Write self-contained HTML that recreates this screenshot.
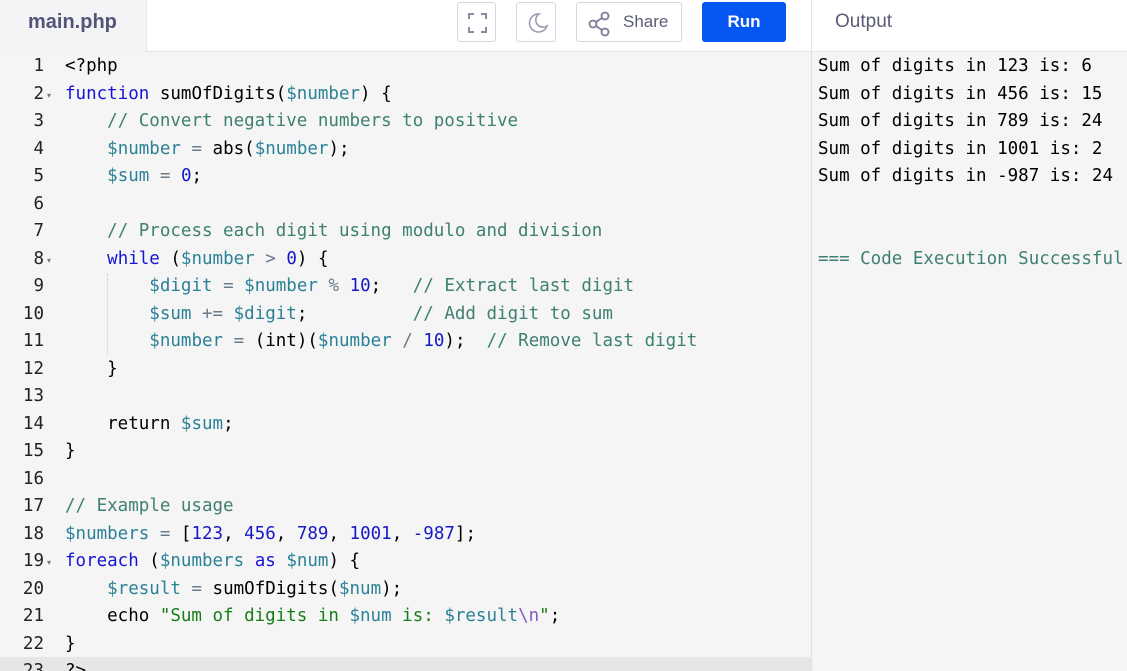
<!DOCTYPE html>
<html><head><meta charset="utf-8"><style>
*{margin:0;padding:0;box-sizing:border-box}
html,body{width:1127px;height:671px;overflow:hidden}
body{background:#f5f5f5;font-family:"Liberation Sans",sans-serif;position:relative}
.hdr{position:absolute;left:0;top:0;width:1127px;height:52px;background:#fff;border-bottom:1px solid #e3e5ea}
.tab{position:absolute;left:0;top:0;width:147px;height:52px;background:#f4f4f6;border-right:1px solid #e3e5ea;color:#525577;font-size:20px;font-weight:bold;padding:11px 0 0 28px}
.btn{position:absolute;top:2px;height:40px;border:1px solid #d6d8e0;border-radius:3px;background:#fff}
.run{position:absolute;left:702px;top:2px;width:84px;height:40px;background:#0556f3;border-radius:3px;color:#fff;font-weight:bold;font-size:17px;text-align:center;line-height:40px}
.out{position:absolute;left:835px;top:11px;font-size:19px;color:#5a5c78}
.vdiv{position:absolute;left:811px;top:0;width:1px;height:671px;background:#dfe1e6}
.code,.res,.gut{position:absolute;font-family:"DejaVu Sans Mono","Liberation Mono",monospace;font-size:17.5px;line-height:27.5px;white-space:pre}
.code{left:65px;top:53px;color:#000}
.gut{left:0;top:53px;width:44px;text-align:right;color:#222}
.res{left:818px;top:53px;color:#000}
.k{color:#1515d6}.v{color:#2b8196}.c{color:#3e8071}.n{color:#1818c8}.s{color:#167e16}.o{color:#6a7a88}.e{color:#7e5cc0}
.arr{position:absolute;left:47px;font-size:8px;color:#777}
.act{position:absolute;left:0;top:657px;width:811px;height:20px;background:#e6e6e6}
.guide{position:absolute;left:107px;border-left:1px dotted #ccc;width:1px}
</style></head><body>
<div class="act"></div>
<div class="hdr"></div>
<div class="tab">main.php</div>
<div class="btn" style="left:457px;width:39px"><svg width="39" height="40" viewBox="0 0 39 40"><g fill="none" stroke="#8a8ca2" stroke-width="2"><path d="M11 16v-5h5M23 11h5v5M28 24v5h-5M16 29h-5v-5"/></g></svg></div>
<div class="btn" style="left:516px;width:40px"><svg width="40" height="40" viewBox="0 0 40 40"><path d="M22 11a9 9 0 1 0 8 12a7 7 0 0 1-8-12z" fill="none" stroke="#9a9cb0" stroke-width="1.6"/></svg></div>
<div class="btn" style="left:576px;width:106px"><svg width="30" height="40" viewBox="0 0 30 40" style="position:absolute;left:8px;top:0"><g fill="none" stroke="#7a7c94" stroke-width="1.8"><circle cx="8" cy="21" r="3.5"/><circle cx="20" cy="13" r="3.5"/><circle cx="20" cy="29" r="3.5"/><path d="M11 19l6-4M11 23l6 4"/></g></svg><span style="position:absolute;left:46px;top:9px;font-size:17px;color:#5a5c78">Share</span></div>
<div class="run">Run</div>
<div class="vdiv"></div>
<div class="out">Output</div>
<div class="guide" style="top:274px;height:82px"></div>
<div class="gut">1
2
3
4
5
6
7
8
9
10
11
12
13
14
15
16
17
18
19
20
21
22
23</div>
<div class="arr" style="top:91px">▾</div><div class="arr" style="top:256px">▾</div><div class="arr" style="top:558px">▾</div>
<div class="code">&lt;?php
<span class="k">function</span> sumOfDigits(<span class="v">$number</span>) {
    <span class="c">// Convert negative numbers to positive</span>
    <span class="v">$number</span> <span class="o">=</span> abs(<span class="v">$number</span>);
    <span class="v">$sum</span> <span class="o">=</span> <span class="n">0</span>;

    <span class="c">// Process each digit using modulo and division</span>
    <span class="k">while</span> (<span class="v">$number</span> <span class="o">&gt;</span> <span class="n">0</span>) {
        <span class="v">$digit</span> <span class="o">=</span> <span class="v">$number</span> <span class="o">%</span> <span class="n">10</span>;   <span class="c">// Extract last digit</span>
        <span class="v">$sum</span> <span class="o">+=</span> <span class="v">$digit</span>;          <span class="c">// Add digit to sum</span>
        <span class="v">$number</span> <span class="o">=</span> (int)(<span class="v">$number</span> <span class="o">/</span> <span class="n">10</span>);  <span class="c">// Remove last digit</span>
    }

    return <span class="v">$sum</span>;
}

<span class="c">// Example usage</span>
<span class="v">$numbers</span> <span class="o">=</span> [<span class="n">123</span>, <span class="n">456</span>, <span class="n">789</span>, <span class="n">1001</span>, <span class="n">-987</span>];
<span class="k">foreach</span> (<span class="v">$numbers</span> <span class="k">as</span> <span class="v">$num</span>) {
    <span class="v">$result</span> <span class="o">=</span> sumOfDigits(<span class="v">$num</span>);
    echo <span class="s">"Sum of digits in </span><span class="v">$num</span><span class="s"> is: </span><span class="v">$result</span><span class="e">\n</span><span class="s">"</span>;
}
?&gt;</div>
<div class="res">Sum of digits in 123 is: 6
Sum of digits in 456 is: 15
Sum of digits in 789 is: 24
Sum of digits in 1001 is: 2
Sum of digits in -987 is: 24


<span class="c">=== Code Execution Successful</span></div>
</body></html>
